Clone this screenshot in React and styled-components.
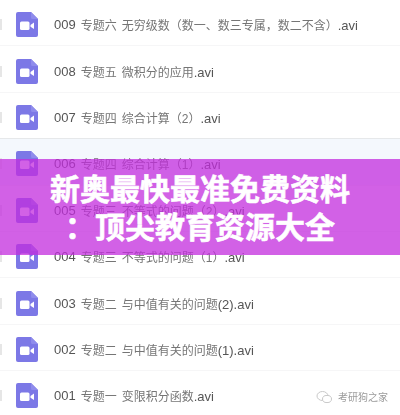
import React from "react";
import styled, { createGlobalStyle } from "styled-components";

const files = [
    { code: "009", topic: "专题六", title: "无穷级数（数一、数三专属，数二不含）", ext: ".avi" },
    { code: "008", topic: "专题五", title: "微积分的应用", ext: ".avi" },
    { code: "007", topic: "专题四", title: "综合计算（2）", ext: ".avi" },
    { code: "006", topic: "专题四", title: "综合计算（1）", ext: ".avi", selected: true },
    { code: "005", topic: "专题三", title: "不等式的问题（2）", ext: ".avi" },
    { code: "004", topic: "专题三", title: "不等式的问题（1）", ext: ".avi" },
    { code: "003", topic: "专题二", title: "与中值有关的问题", ext: "(2).avi" },
    { code: "002", topic: "专题二", title: "与中值有关的问题", ext: "(1).avi" },
    { code: "001", topic: "专题一", title: "变限积分函数", ext: ".avi" },
];

const VideoIcon = () => (
    <svg width="22" height="25" viewBox="0 0 22 25">
        <path d="M2 0H15L22 7V23a2 2 0 0 1-2 2H2a2 2 0 0 1-2-2V2a2 2 0 0 1 2-2z" fill="#7c78e6" />
        <path d="M15 0L22 7H16.500a1.500 1.500 0 0 1-1.500-1.500z" fill="#8f8cec" />
        <rect x="4" y="9.500" width="9.500" height="8.500" rx="1.500" fill="#fff" />
        <path d="M14.500 13L18 10.500V17L14.500 14.800z" fill="#fff" />
    </svg>
);

export default function App() {
    return (
        <>
            <GlobalStyle />
            <Page>
                <List>
                    {files.map((file) => (
                        <Row key={file.code} $selected={file.selected}>
                            <Check />
                            <VideoIcon />
                            <Name>
                                <Latin>{file.code}</Latin>
                                <Chinese>{file.topic}</Chinese>
                                <Chinese>
                                    {file.title}
                                    <Latin>{file.ext}</Latin>
                                </Chinese>
                            </Name>
                        </Row>
                    ))}
                </List>
                <Watermark>
                    <svg width="17" height="14" viewBox="0 0 17 14">
                        <ellipse cx="6.500" cy="6" rx="5.500" ry="4.500" fill="none" stroke="#c8c8c8" />
                        <ellipse cx="11" cy="9" rx="4.500" ry="3.600" fill="#fff" stroke="#c8c8c8" />
                    </svg>
                    <span>考研狗之家</span>
                </Watermark>
                <Banner>
                    <Title>新奥最快最准免费资料</Title>
                    <Title>：顶尖教育资源大全</Title>
                </Banner>
            </Page>
        </>
    );
}

const GlobalStyle = createGlobalStyle`
    html, body {
        margin: 0;
        padding: 0;
        background: #ffffff;
    }
`;
const Page = styled.div`
    position: relative;
    width: 400px;
    height: 415px;
    overflow: hidden;
    background: #ffffff;
    font-family: "Liberation Sans", "Noto Sans CJK SC", sans-serif;
`;
const List = styled.div`
    display: flex;
    flex-direction: column;
    filter: blur(0.4px);
`;
const Row = styled.div`
    display: flex;
    align-items: center;
    box-sizing: border-box;
    height: 46.4px;
    padding-top: 4px;
    border-bottom: 1px solid #f6f6f7;
    background: ${(props) => (props.$selected ? "#f4f8fd" : "transparent")};
    box-shadow: ${(props) => (props.$selected ? "0 -1px 0 #e6e8ea" : "none")};
`;
const Check = styled.div`
    width: 2px;
    height: 11px;
    margin-right: 14px;
    background: #e6e6e6;
`;
const Name = styled.div`
    display: flex;
    align-items: center;
    gap: 5px;
    margin-left: 16px;
    white-space: nowrap;
`;
const Latin = styled.span`
    font-size: 13px;
    color: #555555;
`;
const Chinese = styled.span`
    font-size: 12px;
    color: #757575;
`;
const Watermark = styled.div`
    position: absolute;
    right: 12px;
    bottom: 11px;
    display: flex;
    align-items: center;
    gap: 5px;
    font-size: 10px;
    color: #9a9a9a;
    filter: blur(0.4px);
`;
const Banner = styled.div`
    position: absolute;
    left: 0;
    right: 0;
    top: 159px;
    box-sizing: border-box;
    height: 96px;
    padding-top: 3px;
    display: flex;
    flex-direction: column;
    justify-content: center;
    background: rgba(195, 44, 222, 0.75);
`;
const Title = styled.div`
    font-size: 30px;
    line-height: 38px;
    font-weight: 700;
    color: #ffffff;
    text-align: center;
    -webkit-text-stroke: 0.6px #ffffff;
`;
